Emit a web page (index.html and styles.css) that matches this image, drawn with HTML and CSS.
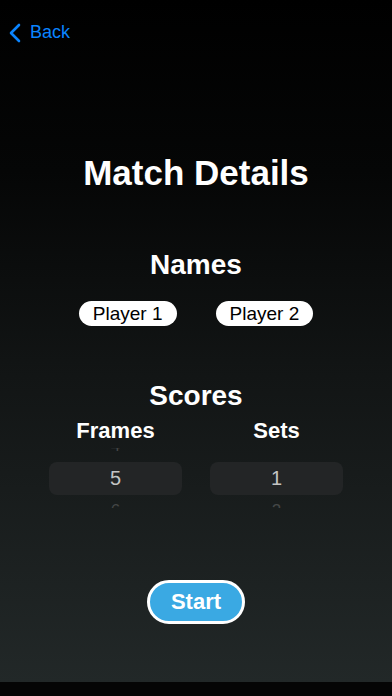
FILE: index.html
```html
<!DOCTYPE html>
<html>
<head>
<meta charset="utf-8">
<link rel="stylesheet" href="styles.css">
</head>
<body>
<div class="screen">
  <div class="nav">
    <a class="back">
      <svg class="chev" width="12" height="20" viewBox="0 0 12 20"><path d="M10 2 L2 10 L10 18" fill="none" stroke="#0a84ff" stroke-width="2.6" stroke-linecap="round" stroke-linejoin="round"/></svg>
      <span>Back</span>
    </a>
  </div>
  <h1 class="title">Match Details</h1>
  <h2 class="section names-h">Names</h2>
  <div class="pills">
    <div class="pill">Player 1</div>
    <div class="pill">Player 2</div>
  </div>
  <h2 class="section scores-h">Scores</h2>
  <div class="cols">
    <div class="col">
      <div class="col-h">Frames</div>
      <div class="wheel">
        <div class="row hint">4</div>
        <div class="row sel">5</div>
        <div class="row hint">6</div>
      </div>
    </div>
    <div class="col">
      <div class="col-h">Sets</div>
      <div class="wheel">
        <div class="row hint"></div>
        <div class="row sel">1</div>
        <div class="row hint">2</div>
      </div>
    </div>
  </div>
  <div class="start-wrap">
    <button class="start">Start</button>
  </div>
</div>
<div class="bottom"></div>
</body>
</html>
```
FILE: styles.css
```css
html, body {
  margin: 0;
  padding: 0;
  background: #000;
}
body {
  width: 392px;
  height: 696px;
  overflow: hidden;
  font-family: "Liberation Sans", Arial, sans-serif;
  color: #fff;
}
.screen {
  height: 682px;
  background: linear-gradient(to bottom, #000 0%, #050606 25%, #121515 55%, #222828 100%);
  display: flex;
  flex-direction: column;
  align-items: center;
}
.nav {
  align-self: stretch;
  height: 64px;
  display: flex;
  align-items: flex-start;
  padding: 22px 0 0 9px;
  box-sizing: border-box;
}
.back {
  display: flex;
  align-items: center;
  gap: 9px;
  color: #0a84ff;
  font-size: 18px;
}
.chev { display: block; }
.title {
  margin: 88px 0 0;
  font-size: 35px;
  line-height: 42px;
  font-weight: bold;
}
.section {
  margin: 0;
  font-size: 28px;
  line-height: 34px;
  font-weight: bold;
}
.names-h { margin-top: 54px; }
.pills {
  display: flex;
  gap: 39px;
  margin-top: 19px;
}
.pill {
  background: #fff;
  color: #000;
  font-size: 19px;
  height: 25px;
  line-height: 25px;
  padding: 0 14px;
  border-radius: 13px;
}
.scores-h { margin-top: 53px; }
.cols {
  display: flex;
  gap: 28px;
  margin-top: 5px;
}
.col {
  width: 133px;
  display: flex;
  flex-direction: column;
  align-items: center;
}
.col-h {
  font-size: 22px;
  line-height: 26px;
  font-weight: bold;
}
.wheel {
  align-self: stretch;
  height: 60px;
  margin-top: 4px;
  overflow: hidden;
  display: flex;
  flex-direction: column;
  justify-content: center;
}
.row {
  flex: 0 0 auto;
  height: 32px;
  line-height: 32px;
  text-align: center;
}
.row.sel {
  height: 33px;
  line-height: 33px;
  background: #232526;
  border-radius: 8px;
  color: #c4c4c4;
  font-size: 20px;
}
.row.hint {
  color: #454747;
  font-size: 17px;
}
.start-wrap {
  margin-top: 72px;
}
.start {
  font-family: "Liberation Sans", Arial, sans-serif;
  font-size: 22px;
  font-weight: bold;
  color: #fff;
  background: #3aa9e3;
  border: 3px solid #fff;
  border-radius: 22px;
  width: 98px;
  height: 44px;
  padding: 0;
}
.bottom {
  height: 14px;
  background: #050505;
}
```
